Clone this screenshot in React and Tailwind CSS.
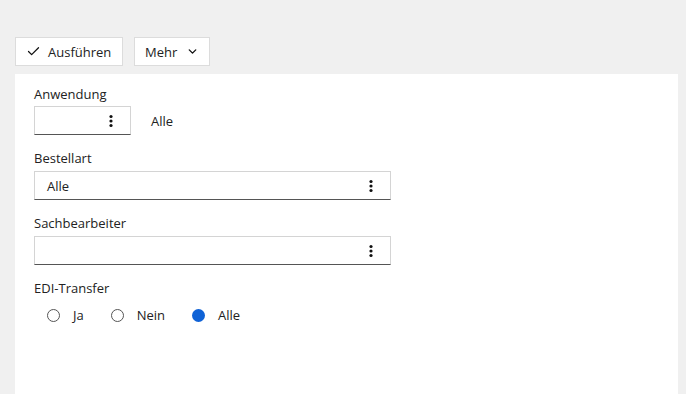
import { Check, ChevronDown } from 'lucide-react';

function Dots() {
  return (
    <svg width="4" height="14" viewBox="0 0 4 14" className="shrink-0">
      <circle cx="2" cy="2.5" r="1.6" fill="#111" />
      <circle cx="2" cy="7" r="1.6" fill="#111" />
      <circle cx="2" cy="11.5" r="1.6" fill="#111" />
    </svg>
  );
}

function Field({ value, className }) {
  return (
    <div
      className={`flex h-[29px] items-center justify-between border border-[#d4d4d4] border-b-[#555] bg-white pl-3 pr-[17px] ${className}`}
    >
      <span>{value}</span>
      <Dots />
    </div>
  );
}

function Radio({ label, checked }) {
  return (
    <label className="flex items-center gap-[13px]">
      {checked ? (
        <span className="h-[13px] w-[13px] rounded-full bg-[#0f62d6]" />
      ) : (
        <span className="h-[13px] w-[13px] rounded-full border-[1.5px] border-[#555]" />
      )}
      <span>{label}</span>
    </label>
  );
}

export default function App() {
  return (
    <div className="h-[394px] w-[686px] overflow-hidden bg-[#f0f0f0] pt-[37px] text-[13px] leading-[18px] text-[#222] font-['Open_Sans',sans-serif]">
      <div className="ml-[15px] flex gap-[11px]">
        <button className="flex h-[29px] w-[108px] items-center gap-[7px] border border-[#dcdcdc] bg-white pl-[10px]">
          <Check size={15} strokeWidth={2} className="text-[#111]" />
          <span>Ausführen</span>
        </button>
        <button className="flex h-[29px] w-[76px] items-center gap-[9px] border border-[#dcdcdc] bg-white pl-[10px]">
          <span>Mehr</span>
          <ChevronDown size={13} strokeWidth={2.5} className="text-[#111]" />
        </button>
      </div>

      <div className="ml-[15px] mt-2 h-[400px] w-[663px] bg-white pl-[19px] pt-[11px]">
        <div className="mb-[3px]">Anwendung</div>
        <div className="flex items-center gap-[20px]">
          <Field value="" className="w-[97px]" />
          <span>Alle</span>
        </div>

        <div className="mb-[4px] mt-[14px]">Bestellart</div>
        <Field value="Alle" className="w-[357px]" />

        <div className="mb-[4px] mt-[14px]">Sachbearbeiter</div>
        <Field value="" className="w-[357px]" />

        <div className="mt-[14px]">EDI-Transfer</div>
        <div className="mt-[9px] flex items-center gap-[27px] pl-[13px]">
          <Radio label="Ja" />
          <Radio label="Nein" />
          <Radio label="Alle" checked />
        </div>
      </div>
    </div>
  );
}
